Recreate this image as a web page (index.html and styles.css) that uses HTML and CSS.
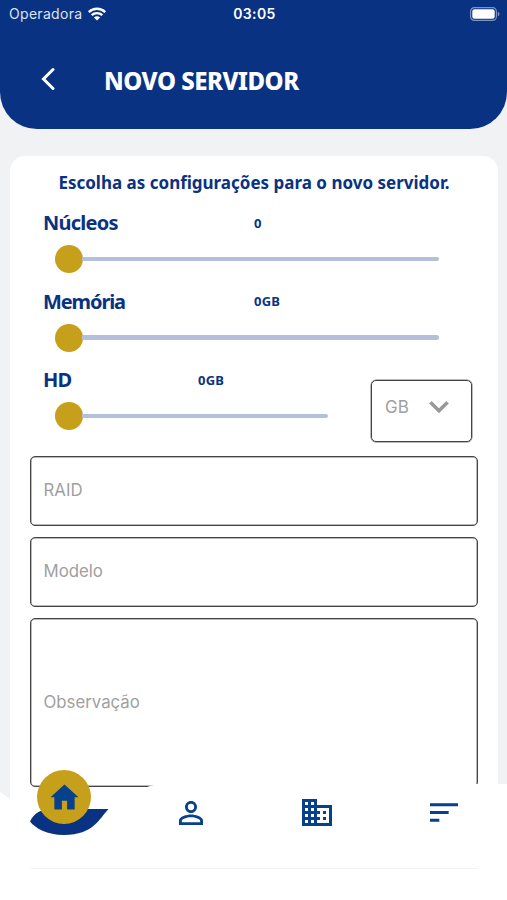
FILE: index.html
```html
<!DOCTYPE html>
<html lang="pt-BR">
<head>
<meta charset="utf-8">
<meta name="viewport" content="width=device-width, initial-scale=1">
<title>Novo servidor</title>
<link rel="stylesheet" href="styles.css">
</head>
<body>
<div class="app">
  <header class="header">
    <div class="status">
      <div class="carrier"><span class="carrier-name">Operadora</span>
        <svg class="wifi" viewBox="0 0 18 14"><g fill="none" stroke="#fff" stroke-width="2.3"><path d="M.8 5.1C5.4.6 12.6.6 17.2 5.1"/><path d="M3.7 8.2c3-2.9 7.6-2.9 10.6 0"/></g><path d="M9 13.6 5.9 10.5c1.7-1.6 4.5-1.6 6.2 0z" fill="#fff"/></svg>
      </div>
      <span class="clock">03:05</span>
      <svg class="battery" viewBox="0 0 30 14"><rect x=".6" y=".6" width="25.8" height="12.8" rx="3.8" fill="none" stroke="#7f93c3" stroke-width="1.2"/><rect x="2.3" y="2.3" width="22.4" height="9.4" rx="2.2" fill="#fff"/><path d="M27.8 4.7c2.2.8 2.2 3.8 0 4.6z" fill="#7f93c3"/></svg>
    </div>
    <div class="title-bar">
      <svg class="back" viewBox="0 0 14 24"><path d="M12 2.500 2.500 12 12 21.500" fill="none" stroke="#fff" stroke-width="3" stroke-linecap="round"/></svg>
      <h1 class="title">NOVO SERVIDOR</h1>
    </div>
  </header>

  <main class="card">
    <p class="intro"><span>Escolha as configurações para o novo servidor.</span></p>
    <section class="control">
      <div class="row"><span class="label nucleos">Núcleos</span><span class="value">0</span></div>
      <div class="slider"><span class="thumb"></span><span class="track"></span></div>
    </section>
    <section class="control">
      <div class="row"><span class="label memoria">Memória</span><span class="value">0GB</span></div>
      <div class="slider"><span class="thumb"></span><span class="track"></span></div>
    </section>
    <div class="disk">
      <section class="control narrow">
        <div class="row"><span class="label hd">HD</span><span class="value">0GB</span></div>
        <div class="slider"><span class="thumb"></span><span class="track"></span></div>
      </section>
      <div class="select"><span>GB</span>
        <svg class="chevron" viewBox="0 0 20 14"><path d="M1.400 2.200 10 10.800 18.600 2.200" fill="none" stroke="#999" stroke-width="3.6"/></svg>
      </div>
    </div>
    <div class="fields">
      <div class="field raid"><span>RAID</span></div>
      <div class="field modelo"><span>Modelo</span></div>
      <div class="field notes"><span>Observação</span></div>
    </div>
  </main>

  <nav class="nav">
    <svg class="nav-shape" viewBox="0 0 507 132"><path d="M0 24 11 32C30 44 95 46 125 31 140 24 145 17 161 16H507V132H0Z" fill="#fff"/><path d="M30 53.500C34 45 41 41 52 41H108.500C99 51 94 66.500 64 67 47 67 35 60 30 53.500Z" fill="#0a3282"/></svg>
    <div class="tabs">
      <div class="tab home"><svg viewBox="0 0 30 26"><path d="M15 0 .5 13.300H4.500V26H12.300V17H17.700V26H25.500V13.300H29.500Z" fill="#07418b"/></svg></div>
      <div class="tab person"><svg viewBox="4 4 16 16"><path fill="#07418b" d="M12 5.900a2.100 2.100 0 1 1 0 4.200 2.100 2.100 0 0 1 0-4.200m0 9c2.970 0 6.100 1.460 6.100 2.100v1.100H5.900V17c0-.64 3.130-2.100 6.100-2.100M12 4C9.790 4 8 5.790 8 8s1.790 4 4 4 4-1.790 4-4-1.790-4-4-4m0 9c-2.670 0-8 1.340-8 4v3h16v-3c0-2.660-5.330-4-8-4"/></svg></div>
      <div class="tab company"><svg viewBox="2 3 20 18"><path fill="#07418b" d="M12 7V3H2v18h20V7zM6 19H4v-2h2zm0-4H4v-2h2zm0-4H4V9h2zm0-4H4V5h2zm4 12H8v-2h2zm0-4H8v-2h2zm0-4H8V9h2zm0-4H8V5h2zm10 12h-8v-2h2v-2h-2v-2h2v-2h-2V9h8zm-2-8h-2v2h2zm0 4h-2v2h2z"/></svg></div>
      <div class="tab sort"><svg viewBox="3 6 18 12"><path fill="#07418b" d="M3 18h6v-2H3zM3 6v2h18V6zm0 7h12v-2H3z"/></svg></div>
    </div>
    <div class="divider"></div>
  </nav>
</div>
</body>
</html>
```
FILE: styles.css
```css
* { box-sizing: border-box; }
body { margin: 0; background: #f0f2f4; }
.app {
  position: relative;
  width: 507px;
  height: 900px;
  overflow: hidden;
  background: #f0f2f4;
  font-family: Inter, sans-serif;
}
svg { display: block; }
span { white-space: nowrap; }

.header {
  height: 128.500px;
  background: #0a3282;
  color: #fff;
  border-radius: 0 0 37px 37px;
}
.status {
  display: grid;
  grid-template-columns: 1fr auto 1fr;
  align-items: center;
  height: 27px;
  padding: 0 7px 0 9px;
}
.carrier { display: flex; align-items: center; gap: 6px; }
.carrier-name { font-size: 14px; letter-spacing: .3px; color: #dbe2f1; }
.wifi { width: 18px; height: 14px; }
.clock { font-size: 14px; font-weight: 600; letter-spacing: .4px; }
.battery { width: 30px; height: 14px; justify-self: end; }
.title-bar { display: flex; align-items: center; height: 106px; padding-left: 41px; margin-top: -1px; }
.back { width: 14px; height: 24px; }
.title {
  margin: 3px 0 0 49px;
  font: 800 24px/30px "Noto Sans", sans-serif;
  letter-spacing: -.5px;
}

.card {
  width: 488px;
  height: 760px;
  margin: 27.500px 0 0 10px;
  padding: 0 20px;
  background: #fff;
  border-radius: 15px;
}
.intro {
  display: flex;
  align-items: center;
  justify-content: center;
  height: 52px;
  margin: 0;
  color: #0a3282;
  font: 700 17px "Noto Sans", sans-serif;
}
.control { height: 78.600px; color: #0a3282; font-family: "Noto Sans", sans-serif; font-weight: 700; }
.row { display: grid; grid-template-columns: 210px 1fr; align-items: center; height: 29px; padding-left: 14px; margin-bottom: 1px; }
.label { margin-left: -1px; font-size: 20px; letter-spacing: -.75px; }
.memoria { letter-spacing: -1.100px; }
.value { font-size: 13px; letter-spacing: .2px; }
.slider { display: flex; align-items: center; width: 384px; height: 42px; margin-left: 24.500px; }
.thumb { width: 28px; height: 28px; border-radius: 50%; background: #c7a01b; }
.track { flex: 1; height: 4.500px; margin-left: -1px; border-radius: 0 3px 3px 0; background: #b4bfdc; }
.disk { display: flex; height: 91px; }
.narrow { width: 341px; }
.narrow .row { grid-template-columns: 154px 1fr; }
.narrow .slider { width: 273px; }
.select {
  display: flex;
  align-items: center;
  gap: 20px;
  width: 101px;
  height: 62px;
  margin-top: 15px;
  padding: 0 0 8px 13px;
  border: 1px solid #444;
  border-radius: 5px;
  box-shadow: 0 0 0 .5px #777;
  color: #a0a0a0;
  font-size: 17px;
}
.chevron { width: 20px; height: 14px; }
.fields { display: flex; flex-direction: column; gap: 11px; }
.field {
  display: flex;
  align-items: center;
  height: 70px;
  padding: 0 13px 2px;
  border: 1px solid #444;
  border-radius: 5px;
  box-shadow: inset 0 0 0 .5px #777;
  color: #a0a0a0;
  font-size: 16.800px;
}
.field span { margin-left: -.5px; }
.notes { height: 169px; }

.nav { position: absolute; left: 0; right: 0; bottom: 0; height: 132px; }
.nav-shape { position: absolute; inset: 0; width: 507px; height: 132px; }
.tabs { position: relative; display: flex; align-items: center; height: 89px; padding-left: 37px; }
.home {
  display: flex;
  align-items: center;
  justify-content: center;
  width: 54px;
  height: 54px;
  margin-bottom: 31px;
  border-radius: 50%;
  background: #c7a01b;
}
.home svg { width: 29px; height: 26px; }
.person { margin-left: 88px; }
.person svg { width: 24px; height: 24px; }
.company { margin-left: 99px; margin-bottom: 1px; }
.company svg { width: 30px; height: 27px; }
.sort { margin-left: 98px; }
.sort svg { width: 28px; height: 19px; }
.divider { position: relative; height: 1px; margin: 11px 29px 0 31px; background: #f3f3f3; }
```
